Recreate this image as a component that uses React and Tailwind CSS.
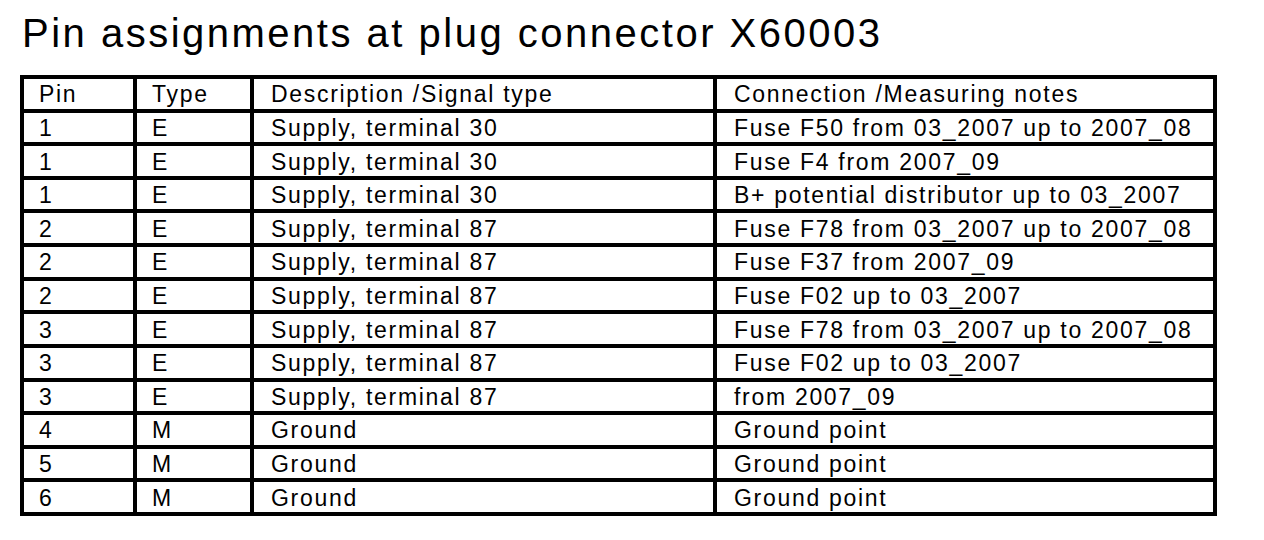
const rows = [
  ["Pin", "Type", "Description /Signal type", "Connection /Measuring notes"],
  ["1", "E", "Supply, terminal 30", "Fuse F50 from 03_2007 up to 2007_08"],
  ["1", "E", "Supply, terminal 30", "Fuse F4 from 2007_09"],
  ["1", "E", "Supply, terminal 30", "B+ potential distributor up to 03_2007"],
  ["2", "E", "Supply, terminal 87", "Fuse F78 from 03_2007 up to 2007_08"],
  ["2", "E", "Supply, terminal 87", "Fuse F37 from 2007_09"],
  ["2", "E", "Supply, terminal 87", "Fuse F02 up to 03_2007"],
  ["3", "E", "Supply, terminal 87", "Fuse F78 from 03_2007 up to 2007_08"],
  ["3", "E", "Supply, terminal 87", "Fuse F02 up to 03_2007"],
  ["3", "E", "Supply, terminal 87", "from 2007_09"],
  ["4", "M", "Ground", "Ground point"],
  ["5", "M", "Ground", "Ground point"],
  ["6", "M", "Ground", "Ground point"],
];

export default function App() {
  return (
    <div className="w-[1264px] h-[540px] bg-white text-black font-['Liberation_Sans',Arial,sans-serif] overflow-hidden">
      <div className="pt-[13px] pl-[22px] text-[40px] leading-[40px] tracking-[2.5px] whitespace-nowrap">
        Pin assignments at plug connector X60003
      </div>
      <div className="mt-[22px] ml-[20px] w-[1197px] h-[441px] bg-black p-[4px] grid gap-[4px] grid-cols-[109px_113px_459px_496px] grid-rows-[repeat(13,minmax(0,1fr))]">
        {rows.map((r, i) =>
          r.map((c, j) => (
            <div
              key={i + "-" + j}
              className={
                "bg-white flex items-center whitespace-nowrap pt-[2px] text-[23px] leading-[23px] tracking-[1.7px] " +
                (j < 2 ? "pl-[15px]" : "pl-[17px]")
              }
            >
              {c}
            </div>
          ))
        )}
      </div>
    </div>
  );
}
